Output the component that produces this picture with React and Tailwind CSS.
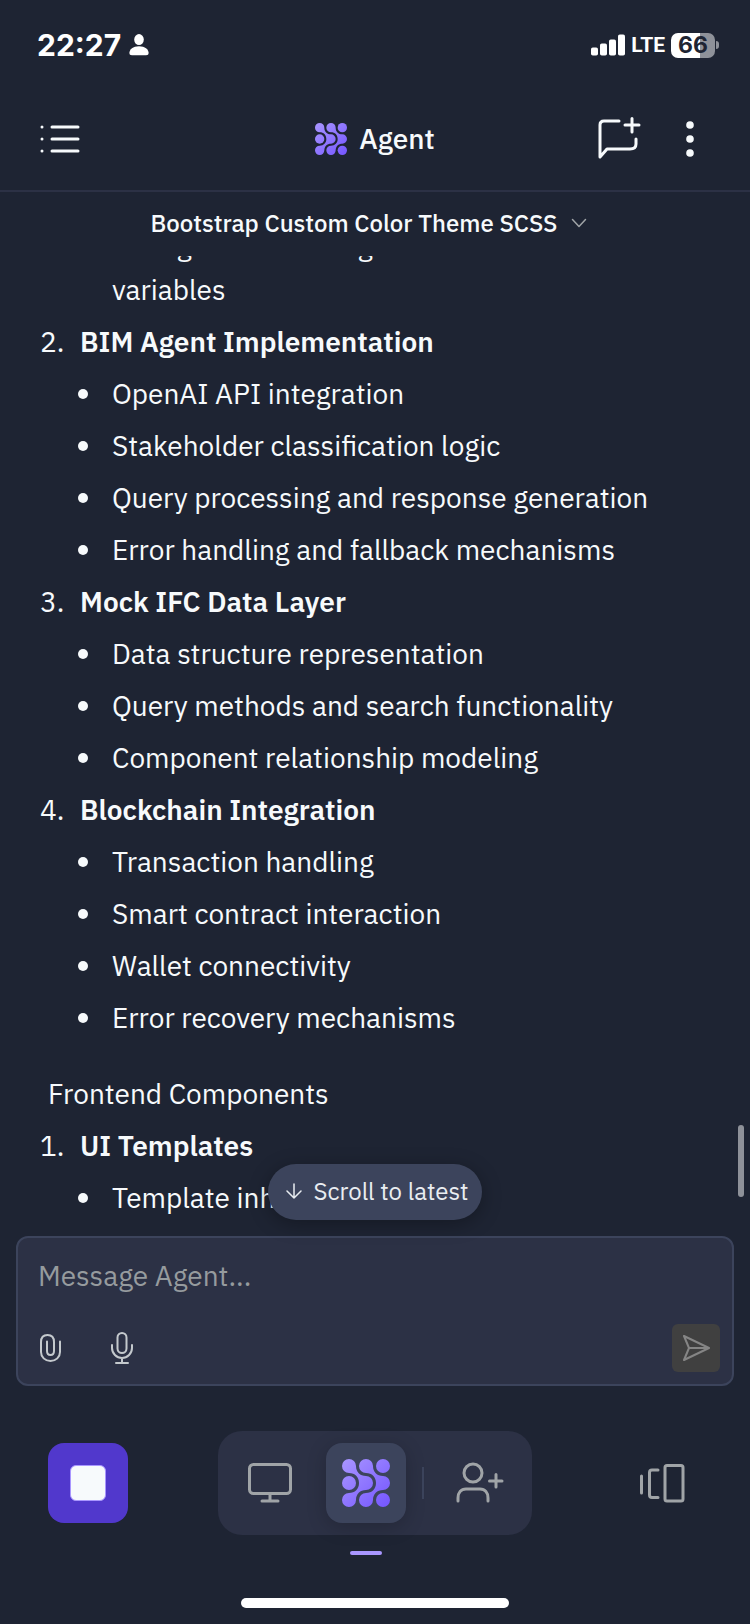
import React from "react";

function AgentMark({ id, className }) {
  return (
    <svg viewBox="0 0 48 48" className={className} aria-hidden="true">
      <defs>
        <linearGradient id={id} x1="0" y1="0" x2="48" y2="48" gradientUnits="userSpaceOnUse">
          <stop offset="0" stopColor="#a996ff" />
          <stop offset="1" stopColor="#7455ff" />
        </linearGradient>
      </defs>
      <g fill={`url(#${id})`}>
        <circle cx="7" cy="24" r="7" />
        <circle cx="41" cy="7" r="7" />
        <circle cx="41" cy="41" r="7" />
        <path d="M14 7C14 13 18 17 24 17A7 7 0 0 1 24 31C18 31 14 35 14 41A7 7 0 1 1 7 34C13 34 17 30 17 24C17 18 13 14 7 14A7 7 0 1 1 14 7Z" />
        <path d="M31 7C31 13 35 17 41 17A7 7 0 0 1 41 31C35 31 31 35 31 41A7 7 0 1 1 24 34C30 34 34 30 34 24C34 18 30 14 24 14A7 7 0 1 1 31 7Z" />
      </g>
    </svg>
  );
}

function StatusBar() {
  return (
    <div className="flex h-[88px] shrink-0 items-center justify-between pt-0.5 pr-[31px] pl-[37px] text-white">
      <div className="flex items-center gap-2">
        <span className="font-[Inter,sans-serif] text-[30px] leading-8 font-bold">22:27</span>
        <svg viewBox="0 0 20 22" className="h-[22px] w-5" fill="currentColor" aria-hidden="true">
          <ellipse cx="10" cy="5.6" rx="4.8" ry="5.5" />
          <path d="M10 12.2C16 12.2 19.6 15.6 19.6 18.8C19.6 20.6 18.8 21.2 17 21.2H3C1.2 21.2 0.4 20.6 0.4 18.8C0.4 15.6 4 12.2 10 12.2Z" />
        </svg>
      </div>
      <div className="flex items-center gap-1.5">
        <svg viewBox="0 0 34 22" className="h-[22px] w-[34px]" fill="currentColor" aria-hidden="true">
          <rect x="0" y="13.5" width="7" height="8" rx="1.8" />
          <rect x="9" y="9.5" width="7" height="12" rx="1.8" />
          <rect x="18" y="5.5" width="7" height="16" rx="1.8" />
          <rect x="27" y="0.5" width="7" height="21" rx="1.8" />
        </svg>
        <span className="font-[Roboto,sans-serif] text-[21px] leading-6 font-bold">LTE</span>
        <div className="flex items-center gap-px">
          <span className="flex h-[25px] w-11 items-center justify-center rounded-[7px] bg-linear-to-r from-white from-66% to-[#8e9199] to-66% font-[Inter,sans-serif] text-[23px] leading-6 font-bold text-[#1e2433]">
            66
          </span>
          <span className="h-2 w-[3px] rounded-r-full bg-[#8e9199]" />
        </div>
      </div>
    </div>
  );
}

function Header() {
  return (
    <header className="flex h-[104px] shrink-0 items-center border-b-2 border-[#2c3145] px-9">
      <div className="flex flex-1">
        <button type="button" aria-label="Open chat list" className="p-1">
          <svg viewBox="0 0 40 32" className="h-8 w-10" fill="currentColor" aria-hidden="true">
            <circle cx="2" cy="4" r="1.5" />
            <circle cx="2" cy="16" r="1.5" />
            <circle cx="2" cy="28" r="1.5" />
            <path d="M12 4H38M12 16H38M12 28H38" stroke="currentColor" strokeWidth="3" strokeLinecap="round" />
          </svg>
        </button>
      </div>
      <h1 className="flex items-center gap-3 text-[28px] leading-9 font-medium">
        <AgentMark id="mark-header" className="size-8" />
        Agent
      </h1>
      <div className="flex flex-1 items-center justify-end gap-[25px]">
        <button type="button" aria-label="New chat">
          <svg viewBox="0 0 44 44" className="size-11" fill="none" stroke="currentColor" strokeWidth="3" strokeLinecap="round" strokeLinejoin="round" aria-hidden="true">
            <path d="M22 4H7Q3 4 3 8V40L10 32H33Q39 32 39 27V22" />
            <path d="M28 8H42M35 1.500V15" />
          </svg>
        </button>
        <button type="button" aria-label="More options" className="px-2">
          <svg viewBox="0 0 32 44" className="h-11 w-8" fill="currentColor" aria-hidden="true">
            <circle cx="16" cy="8" r="3.800" />
            <circle cx="16" cy="22" r="3.800" />
            <circle cx="16" cy="36" r="3.800" />
          </svg>
        </button>
      </div>
    </header>
  );
}

const backend = [
  { title: "Flask Application", items: ["Configuration management and environment variables"] },
  {
    title: "BIM Agent Implementation",
    items: [
      "OpenAI API integration",
      "Stakeholder classification logic",
      "Query processing and response generation",
      "Error handling and fallback mechanisms",
    ],
  },
  {
    title: "Mock IFC Data Layer",
    items: [
      "Data structure representation",
      "Query methods and search functionality",
      "Component relationship modeling",
    ],
  },
  {
    title: "Blockchain Integration",
    items: [
      "Transaction handling",
      "Smart contract interaction",
      "Wallet connectivity",
      "Error recovery mechanisms",
    ],
  },
];

const frontend = [{ title: "UI Templates", items: ["Template inheritance"] }];

function Outline({ sections }) {
  return (
    <ol>
      {sections.map((section, index) => (
        <li key={section.title}>
          <div className="flex py-1">
            <span className="w-10">{index + 1}.</span>
            <strong className="font-semibold">{section.title}</strong>
          </div>
          <ul className="pl-10">
            {section.items.map((item) => (
              <li key={item} className="flex py-1">
                <span className="flex h-11 w-8 shrink-0 items-center">
                  <span className="-ml-0.5 size-2.5 rounded-full bg-current" />
                </span>
                <span>{item}</span>
              </li>
            ))}
          </ul>
        </li>
      ))}
    </ol>
  );
}

function Composer() {
  return (
    <form className="mx-4 flex h-[150px] shrink-0 flex-col justify-between rounded-xl border-2 border-[#3c445c] bg-[#2c3145] p-3" onSubmit={(event) => event.preventDefault()}>
      <input
        type="text"
        aria-label="Message Agent"
        placeholder="Message Agent..."
        className="mt-1.5 h-10 w-full bg-transparent px-2 text-[28px] outline-none placeholder:text-[#969b9e]"
      />
      <div className="flex items-center justify-between">
        <div className="flex items-center gap-10 pl-1 text-[#c4c9cd]">
          <button type="button" aria-label="Attach a file">
            <svg viewBox="0 0 32 32" className="size-8" fill="none" stroke="currentColor" strokeWidth="2" strokeLinecap="round" aria-hidden="true">
              <path d="M26 9.500V20C26 25 22 29 16.500 29S7 25 7 20V10C7 5.500 9.500 3 13.500 3S20 5.500 20 10V19C20 21.500 18.500 23 16.500 23S13 21.500 13 19V9.500" />
            </svg>
          </button>
          <button type="button" aria-label="Record audio">
            <svg viewBox="0 0 32 32" className="size-8" fill="none" stroke="currentColor" strokeWidth="2" strokeLinecap="round" aria-hidden="true">
              <rect x="11.500" y="1" width="9" height="20" rx="4.500" />
              <path d="M6 13V16C6 21.500 10.500 26 16 26S26 21.500 26 16V13M16 26V31M10 31H22" />
            </svg>
          </button>
        </div>
        <button type="submit" aria-label="Send" className="flex size-12 items-center justify-center rounded-md bg-[#404040] text-[#858585]">
          <svg viewBox="0 0 28 28" className="size-7" fill="none" stroke="currentColor" strokeWidth="2" strokeLinejoin="round" aria-hidden="true">
            <path d="M2 2L27 14L2 26L7 14ZM7 14H27" />
          </svg>
        </button>
      </div>
    </form>
  );
}

function BottomNav() {
  const navButton = "flex size-20 items-center justify-center";
  return (
    <nav aria-label="Main" className="mt-[45px] flex shrink-0 items-center justify-between px-12 text-[#a0a4a7]">
      <button type="button" aria-label="Stop" className="flex size-20 items-center justify-center rounded-2xl bg-[#5138cc]">
        <span className="size-9 rounded-md border border-[#a996ff] bg-[#f7fafc]" />
      </button>
      <div className="flex items-center gap-4 rounded-3xl bg-[#2c3145] p-3">
        <button type="button" aria-label="Desktop" className={navButton}>
          <svg viewBox="0 0 48 48" className="size-12" fill="none" stroke="currentColor" strokeWidth="3" strokeLinecap="round" aria-hidden="true">
            <rect x="3.500" y="5.500" width="41" height="29" rx="4" />
            <path d="M24 35V42M16 42H32" />
          </svg>
        </button>
        <button type="button" aria-label="Agent" aria-current="page" className="relative flex size-20 items-center justify-center rounded-2xl bg-[#3c445c] shadow-[0_4px_20px_rgba(0,0,0,0.2)]">
          <AgentMark id="mark-nav" className="size-12" />
          <span className="absolute -bottom-8 left-6 h-1 w-8 rounded-full bg-[#a996ff]" />
        </button>
        <span className="h-8 w-0.5 bg-[#3c445c]" />
        <button type="button" aria-label="Invite" className={navButton}>
          <svg viewBox="0 0 48 48" className="size-12" fill="none" stroke="currentColor" strokeWidth="3" strokeLinecap="round" aria-hidden="true">
            <circle cx="17" cy="14" r="9" />
            <path d="M2 42V39C2 33.500 5 30 10 30H24C29 30 32 33.500 32 39V42M33.500 22H46M40 15.500V28" />
          </svg>
        </button>
      </div>
      <button type="button" aria-label="Panels" className={navButton}>
        <svg viewBox="0 0 48 48" className="size-12" fill="none" stroke="currentColor" strokeWidth="3" strokeLinecap="round" aria-hidden="true">
          <rect x="27" y="6.500" width="18" height="35.500" rx="2" />
          <path d="M20 11H14Q11.500 11 11.500 13.500V36Q11.500 38.500 14 38.500H20M3.500 17V34" />
        </svg>
      </button>
    </nav>
  );
}

export default function App() {
  return (
    <div className="flex h-screen flex-col bg-[#1e2433] font-['IBM_Plex_Sans','Noto_Sans',sans-serif] text-[#f7fafc]">
      <StatusBar />
      <Header />
      <div className="flex h-16 shrink-0 items-center justify-center pr-3 pb-0.5">
        <button type="button" className="flex items-center gap-3.5 text-[24px] leading-8 font-medium">
          Bootstrap Custom Color Theme SCSS
          <svg viewBox="0 0 16 16" className="size-4" fill="none" stroke="#a0a4a7" strokeWidth="1.500" strokeLinecap="round" strokeLinejoin="round" aria-hidden="true">
            <path d="M1.500 4.500L8 11.500L14.500 4.500" />
          </svg>
        </button>
      </div>
      <main className="relative flex min-h-0 flex-1 flex-col">
        <div className="flex min-h-0 flex-1 flex-col justify-end overflow-hidden px-10 pb-3 text-[28px] leading-11">
          <Outline sections={backend} />
          <h2 className="mt-6 py-1 pl-2">Frontend Components</h2>
          <Outline sections={frontend} />
        </div>
        <div className="absolute right-1.5 bottom-[39px] h-[72px] w-1.5 rounded-full bg-[#8e9199]" />
        <div className="absolute inset-x-0 bottom-4 flex justify-center">
          <button type="button" className="flex h-14 items-center gap-3 rounded-full bg-[#3c445c] pr-3.5 pb-0.5 pl-[18px] text-[24px] leading-8 text-[#e9edf1] shadow-[0_4px_20px_rgba(0,0,0,0.3)]">
            <svg viewBox="0 0 16 16" className="size-4" fill="none" stroke="currentColor" strokeWidth="1.500" strokeLinecap="round" strokeLinejoin="round" aria-hidden="true">
              <path d="M8 1V15M1 8L8 15L15 8" />
            </svg>
            Scroll to latest
          </button>
        </div>
      </main>
      <Composer />
      <BottomNav />
      <div className="mx-auto mt-[63px] mb-4 h-2.5 w-[268px] shrink-0 rounded-full bg-white" />
    </div>
  );
}
